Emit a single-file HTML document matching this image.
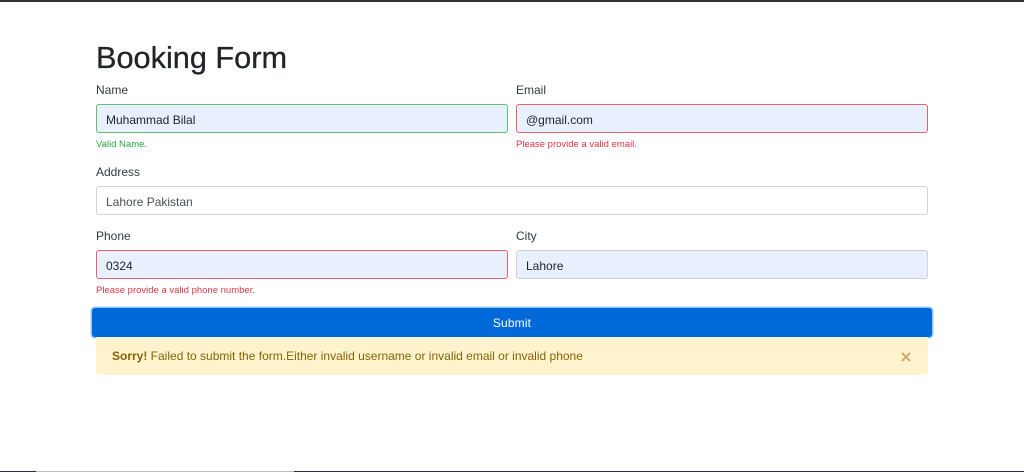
<!DOCTYPE html>
<html lang="en">
<head>
<meta charset="utf-8">
<title>Booking Form</title>
<style>
html,body{margin:0;padding:0;width:1024px;height:472px;overflow:hidden;background:#fff}
body{position:relative;font-family:"Liberation Sans",Arial,sans-serif;color:#212529}
.a{position:absolute;box-sizing:border-box}
.t{position:absolute;white-space:nowrap;line-height:20px;font-size:12px}
.lab{color:#333a40}
.inp{height:29px;width:412px;border:1px solid #ced4da;border-radius:3px;background:#fff}
.fill{background:#e8f0fe}
.ok{border-color:#5cc276}
.bad{border-color:#e8606f}
.val{color:#1f2429}
.fb{font-size:9.5px;line-height:14px}
</style>
</head>
<body>
<div class="a" style="left:0;top:0;width:1024px;height:2px;background:#333"></div>

<div class="t" style="left:96px;top:39px;font-size:30.7px;line-height:38px;color:#212529;-webkit-text-stroke:.3px #212529">Booking Form</div>

<div class="t lab" style="left:96px;top:80px">Name</div>
<div class="a inp fill ok" style="left:96px;top:104px"></div>
<div class="t val" style="left:106px;top:110px">Muhammad Bilal</div>
<div class="t fb" style="left:96px;top:138px;color:#28a745">Valid Name.</div>

<div class="t lab" style="left:516px;top:80px">Email</div>
<div class="a inp fill bad" style="left:516px;top:104px"></div>
<div class="t val" style="left:526px;top:110px">@gmail.com</div>
<div class="t fb" style="left:516px;top:138px;color:#dc3545">Please provide a valid email.</div>

<div class="t lab" style="left:96px;top:162px">Address</div>
<div class="a inp" style="left:96px;top:186px;width:832px"></div>
<div class="t" style="left:106px;top:192px;color:#495057">Lahore Pakistan</div>

<div class="t lab" style="left:96px;top:226px">Phone</div>
<div class="a inp fill bad" style="left:96px;top:250px"></div>
<div class="t val" style="left:106px;top:256px">0324</div>
<div class="t fb" style="left:96px;top:284px;color:#dc3545">Please provide a valid phone number.</div>

<div class="t lab" style="left:516px;top:226px">City</div>
<div class="a inp fill" style="left:516px;top:250px"></div>
<div class="t val" style="left:526px;top:256px">Lahore</div>

<div class="a" style="left:92px;top:308px;width:840px;height:29px;background:#0069d9;border-radius:3px;box-shadow:0 0 0 1.5px rgba(38,143,255,.5)"></div>
<div class="t" style="left:92px;top:313px;width:840px;text-align:center;color:#fff;letter-spacing:.15px">Submit</div>

<div class="a" style="left:96px;top:337px;width:832px;height:38px;background:#fff3cd;border-radius:0 0 3px 3px"></div>
<div class="t" style="left:112px;top:346px;color:#856404"><b>Sorry!</b> Failed to submit the form.Either invalid username or invalid email or invalid phone</div>
<svg class="a" style="left:900px;top:351px" width="12" height="12" viewBox="0 0 12 12"><path d="M2 2 L10 10 M10 2 L2 10" stroke="#ceaa79" stroke-width="2" fill="none"/></svg>

<div class="a" style="left:0;top:471px;width:36px;height:1px;background:#26323f"></div>
<div class="a" style="left:36px;top:471px;width:258px;height:1px;background:#bdbdbd"></div>
<div class="a" style="left:294px;top:471px;width:730px;height:1px;background:#26323f"></div>
</body>
</html>
